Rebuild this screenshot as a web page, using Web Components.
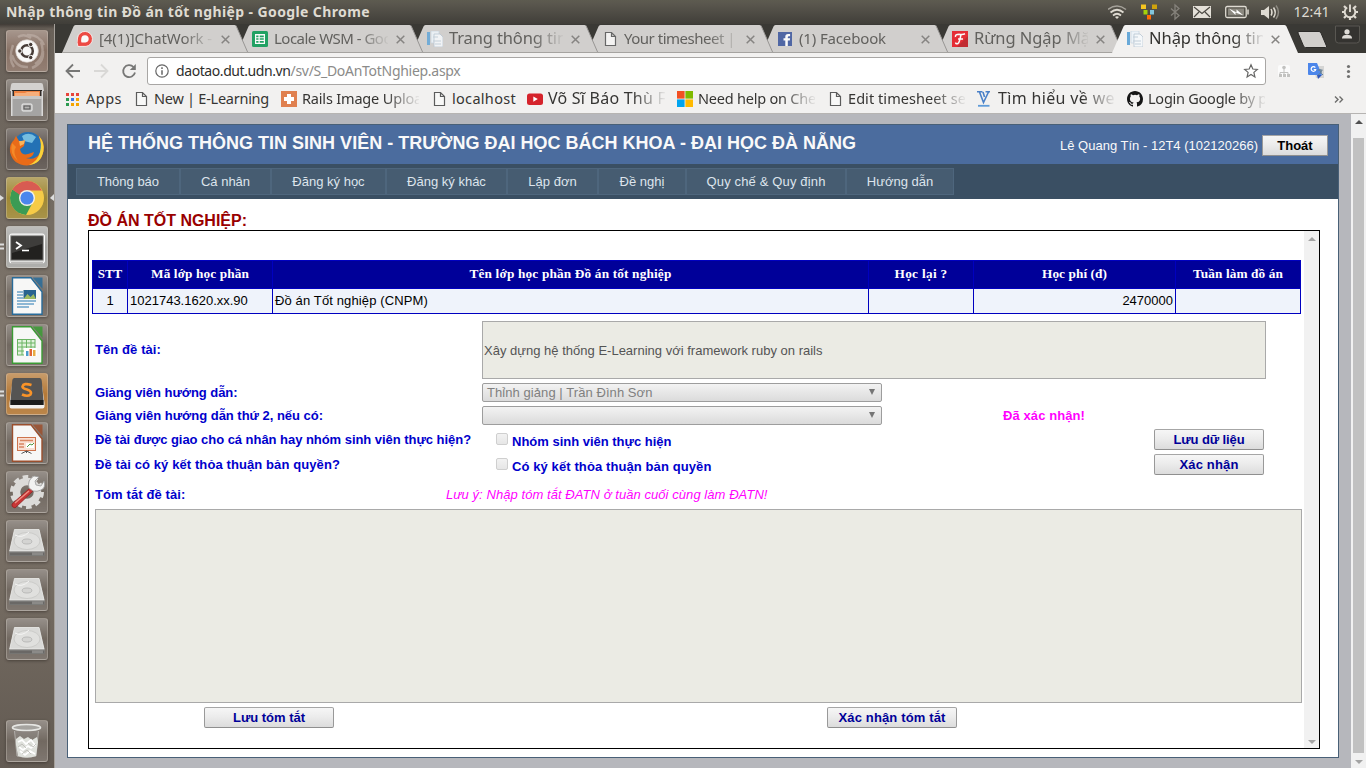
<!DOCTYPE html>
<html lang="vi">
<head>
<meta charset="utf-8">
<title>Nhập thông tin Đồ án tốt nghiệp</title>
<style>
html,body{margin:0;height:100%;overflow:hidden}
body{font-family:"Liberation Sans",Arial,sans-serif;font-size:13px}
</style>
</head>
<body>
<desktop-screen></desktop-screen>
<script>
const define = (name, html, setup) => {
  const tpl = document.createElement('template');
  tpl.innerHTML = html;
  customElements.define(name, class extends HTMLElement {
    constructor(){ super(); this.attachShadow({mode:'open'}); }
    connectedCallback(){
      if (this.shadowRoot.childNodes.length) return;
      if (setup) setup(this, tpl); else this.shadowRoot.append(tpl.content.cloneNode(true));
    }
  });
};

/* One line of text whose tracking is adjusted to a given width */
customElements.define('fit-text', class extends HTMLElement {
  constructor(){ super(); this.attachShadow({mode:'open'}).innerHTML =
    '<style>:host{display:inline-block;white-space:pre}span{display:inline-block}</style><span><slot></slot></span>'; }
  connectedCallback(){
    requestAnimationFrame(()=>this.fit());
    this.fit();
  }
  fit(){
    const w = +this.getAttribute('w'), s = this.shadowRoot.querySelector('span');
    s.style.letterSpacing = '0';
    const n = s.getBoundingClientRect().width, c = this.textContent.length;
    if (!w || !n) return;
    this.style.width = w + 'px';
    s.style.letterSpacing = ((w - n) / c).toFixed(3) + 'px';
  }
});

const FILE = '<svg width="16" height="16" viewBox="0 0 16 16"><path d="M3.5 1.5h6l4 4v9h-10zM9.5 1.5v4h4" fill="#f8f8f7" stroke="#5c5c5c" stroke-width="1.2"/></svg>';
const PAGES = '<svg width="16" height="16" viewBox="0 0 16 16"><path d="M0 1h3v13H0z" fill="#69a9d8"/><path d="M4 0h8v12H4z" fill="#edf3f8" stroke="#c5d3df" stroke-width=".7"/><path d="M7 3h6l3 3v10H7z" fill="#f5f8fa" stroke="#b7c5d2" stroke-width=".8"/><path d="M6 6h5M6 10h8M8 13h6" stroke="#c1ced9"/></svg>';
const ICONS = {
  file: FILE, pages: PAGES,
  chatwork:'<svg width="16" height="16" viewBox="0 0 16 16"><path d="M1 15.5Q-.5 12 .5 7A7.5 7.5 0 1 1 9 15.4Q5 15.3 1 15.5Z" fill="#f03c36" stroke="#fff" stroke-width=".8"/><path d="M4.5 11.5Q3.800 10 4.300 7.500A3.700 3.700 0 1 1 8.500 11.500Z" fill="#fff"/></svg>',
  sheets:'<svg width="16" height="16" viewBox="0 0 16 16"><rect width="16" height="16" rx="1.500" fill="#0f9d58"/><path d="M3 3h10v10H3z" fill="#fff"/><path d="M4.200 4.500h2.300v1.700H4.200zM7.700 4.500h4.100v1.700H7.700zM4.200 7.300h2.300v1.500H4.200zM7.700 7.300h4.100v1.500H7.700zM4.200 10h2.300v1.700H4.200zM7.700 10h4.100v1.700H7.700z" fill="#0f9d58"/></svg>',
  fb:'<svg width="16" height="16" viewBox="0 0 16 16"><rect x="1" y="1" width="14" height="14" fill="#435ca0"/><path d="M8.300 15V9.600H6.500V7.300h1.800V5.800q0-2.800 2.800-2.800h2v2.300h-1.300q-1 0-1 1v1h2.300l-.3 2.300h-2V15z" fill="#fff"/></svg>',
  red:'<svg width="16" height="16" viewBox="0 0 16 16"><rect width="16" height="16" fill="#e81c25"/><path d="M16 5v11H5z" fill="#c01b22"/><path d="M3.500 6Q3 3.200 7 3.200q4 .5 6-.4M9 3.500q-1.500 8-3 9Q4 13.500 3.500 11.500M6 8h5" fill="none" stroke="#fff" stroke-width="1.500"/></svg>',
  apps:'<svg width="16" height="16" viewBox="0 0 16 16"><path d="M1 2h3v3H1z M6 2h3v3H6z M11 2h3v3h-3z" fill="#e8453c"/><path d="M1 7h3v3H1z" fill="#2d9a50"/><path d="M6 7h3v3H6z" fill="#3c78e7"/><path d="M11 7h3v3h-3z" fill="#f5a400"/><path d="M1 12h3v3H1z" fill="#2d9a50"/><path d="M6 12h3v3H6zM11 12h3v3h-3z" fill="#f5a400"/></svg>',
  plus:'<svg width="16" height="16" viewBox="0 0 16 16"><rect width="16" height="16" fill="#e0804f"/><path d="M6 3h4v3h3v4h-3v3H6v-3H3V6h3z" fill="#fff"/></svg>',
  yt:'<svg width="16" height="16" viewBox="0 0 16 16"><rect y="2.500" width="16" height="11.500" rx="2.500" fill="#d5232b"/><path d="M6.300 5.500v5.200l4.500-2.600z" fill="#fff"/></svg>',
  ms:'<svg width="16" height="16" viewBox="0 0 16 16"><path d="M0 0h7.600v7.600H0z" fill="#f25022"/><path d="M8.400 0H16v7.600H8.400z" fill="#7fba00"/><path d="M0 8.400h7.600V16H0z" fill="#00a4ef"/><path d="M8.400 8.400H16V16H8.400z" fill="#ffb900"/></svg>',
  v:'<svg width="16" height="16" viewBox="0 0 16 16"><path d="M0 .8h5.500M8.500.8h4.500M2.500 1l4 10.500L11.500 1M6 1l1.500 5" fill="none" stroke="#4a80c8" stroke-width="1.600"/><path d="M1 14.800h11.500" stroke="#5f9bd8" stroke-width="1.800"/></svg>',
  gh:'<svg width="16" height="16" viewBox="0 0 16 16"><path fill="#161616" d="M8 0C3.580 0 0 3.580 0 8c0 3.540 2.290 6.530 5.470 7.590.4.070.55-.17.55-.38 0-.19-.01-.82-.01-1.490-2.010.37-2.530-.49-2.690-.94-.09-.23-.48-.94-.82-1.130-.28-.15-.68-.52-.01-.53.63-.01 1.080.58 1.230.82.720 1.210 1.870.87 2.330.66.070-.52.28-.87.510-1.070-1.780-.2-3.640-.89-3.640-3.950 0-.87.310-1.590.82-2.150-.08-.2-.36-1.020.08-2.120 0 0 .67-.21 2.200.82a7.600 7.600 0 0 1 4 0c1.530-1.040 2.200-.82 2.200-.82.440 1.100.16 1.920.08 2.120.51.56.82 1.270.82 2.150 0 3.070-1.870 3.750-3.650 3.950.29.25.54.73.54 1.480 0 1.070-.01 1.930-.01 2.200 0 .21.15.46.55.38A8 8 0 0 0 16 8c0-4.420-3.580-8-8-8z"/></svg>'
};

/* Top desktop panel */
define('desktop-panel', `<style>
:host{display:flex;align-items:center;height:24px;background:linear-gradient(#5d5b50,#5a574e 15%,#403e39);color:#dfdbd2;font-family:"Noto Sans","Open Sans",sans-serif;box-sizing:border-box;padding-left:6px}
b{font-size:14px;line-height:24px;flex:1}
svg{display:block;flex:none}
</style>
<b><fit-text w="364">Nhập thông tin Đồ án tốt nghiệp - Google Chrome</fit-text></b>
<svg width="258" height="24" viewBox="0 0 258 24">
 <g transform="translate(-1108 0)" fill="none" stroke="#dfdbd2">
  <path d="M1108 9.500q9-7 18 0" stroke="#a5a29a" stroke-width="1.500"/><path d="M1110.500 12.500q6.500-5.500 13 0M1113 15.500q4-3.500 8 0" stroke-width="1.700"/><path d="M1115 17l2 2 2-2q-2-1.500-4 0z" fill="#dfdbd2" stroke="none"/>
  <path d="M1141 4.500h5v4.500h-5z" fill="#f5c520" stroke="none"/><path d="M1152 4.500h5v4.500h-5z" fill="#cfa30c" stroke="none"/><path d="M1143.500 10h4v4.500h-4z" fill="#a5d20a" stroke="none"/><path d="M1150 10h4v4.500h-4z" fill="#83c5dc" stroke="none"/><path d="M1147 15h4v4.500h-4z" fill="#ff6a05" stroke="none"/>
  <path d="M1171 8.500l8 7-4 3.500V5l4 3.500-8 7" stroke="#85827b" stroke-width="1.300"/>
  <rect x="1193" y="6" width="18" height="12" fill="#e4e0d8" stroke="none"/><path d="M1194 7l8 6.500 8-6.500M1194 17l5-5M1210 17l-5-5" stroke="#4b4842" stroke-width="1.200"/>
  <rect x="1225.700" y="6.500" width="20.500" height="11" rx="1.500" stroke-width="1.300"/><rect x="1228" y="8.500" width="16" height="7" fill="#8b887f" stroke="none"/><path d="M1248 9.500v5" stroke-width="1.500"/><path d="M1229 8.500l7.500 4v-3l7 6-8-3v2.500z" fill="#fff" stroke="none"/>
  <path d="M1261 10h3l5-4v13l-5-4h-3z" fill="#dfdbd2" stroke="none"/><path d="M1271 9q2 3.500 0 6.500M1273.500 7.500q3.500 5 0 10" stroke-width="1.500"/><path d="M1276 5.500q5 6.500 0 13.500" stroke="#8e8b83" stroke-width="1.400"/>
 </g>
 <text x="185.500" y="17.300" textLength="36" lengthAdjust="spacingAndGlyphs" font-size="14" fill="#dfdbd2">12:41</text>
 <g transform="translate(242 12)" stroke="#dfdbd2" fill="none"><path d="M-2.800-4.500A5.300 5.300 0 1 0 2.800-4.500" stroke-width="1.900"/><path d="M0-7.500V0" stroke-width="1.900"/><path d="M4-4 6-6M-4-4-6-6M5.500 0H8M-5.500 0H-8M4 4 6 6M-4 4-6 6M0 5.500V8" stroke-width="2.200"/></g>
</svg>`);

/* Launcher tile */
define('launcher-tile','', (el)=>{
  el.shadowRoot.innerHTML = `<style>
:host{display:block;position:relative;width:42px;height:42px;flex:none}
.t{width:42px;height:42px;box-sizing:border-box;border-radius:3px;border:1px solid rgba(225,218,210,.3);background:linear-gradient(rgba(255,255,255,.28),rgba(255,255,255,.03) 50%,rgba(255,255,255,.12)),${el.getAttribute('tint')||'#6d645c'};box-shadow:0 1px 3px rgba(30,25,20,.45)}
svg{display:block;margin:-1px}
.m{position:absolute;margin:0;top:17px;left:-6px}
.n{left:43px}
</style><div class="t"><svg width="42" height="42" viewBox="0 0 42 42">${TILES[el.getAttribute('kind')]}</svg></div>`
  + (el.getAttribute('marks')==='arrows' ? '<svg class="m" width="5" height="8"><path d="M0 1l4 3-4 3z" fill="#ddd"/></svg><svg class="m n" width="5" height="8"><path d="M5 0v7L1 4z" fill="#ddd"/></svg>' : '')
  + (el.getAttribute('marks')==='bars' ? '<svg class="m" width="5" height="8"><path d="M0 1.500h4M0 5.500h4" stroke="#ddd" stroke-width="2"/></svg>' : '');
});
const doc = (c,b)=>`<path d="M6.500 2.800h18.500l11 14v22.400H6.500z" fill="#f7f7f6" stroke="${c}" stroke-width="1.400"/><path d="M26.500 2.500H36.500V14z" fill="${c}" fill-opacity=".85"/>${b}`;
const DISK = '<path d="M8.500 9.500h25l5 22v3.500q0 1-1 1H4.500q-1 0-1-1v-3.500z" fill="#9b9b99"/><path d="M8.500 9.500h24.500l5 21.500H3.700z" fill="#d9d9d7" stroke="#ececea" stroke-width=".8"/><path d="M3.500 31.500h35v4.300h-35z" fill="#6a6866"/><path d="M3.500 31.300h35v1h-35z" fill="#a9a8a6"/><path d="M26 32.300h11v3H26z" fill="#8b8a88"/><ellipse cx="21" cy="21" rx="13" ry="8.500" fill="#e0e0de" stroke="#c6c6c4" stroke-width=".8"/><ellipse cx="21" cy="21.500" rx="4.800" ry="2.500" fill="#d4d4d2" stroke="#b0b0ae" stroke-width=".8"/><path d="M9 15q7 4 14-3" fill="none" stroke="#f4f4f3" stroke-width="1"/>';
const TILES = {
 ubuntu:'<path d="M21 5Q33 4 38 15M37 21Q38 33 26 38M8 37Q2 29 7 15M12 7Q18 3 25 8M35 12Q40 27 29 34M22 37Q10 38 6 25" fill="none" stroke="#c9bcb3" stroke-opacity=".5" stroke-width="2.500"/><circle cx="21" cy="21" r="11.300" fill="#f9f8f7" stroke="#d6ccc5" stroke-width=".7"/><circle cx="21" cy="21" r="5.800" fill="none" stroke="#463b36" stroke-width="2.500"/><g fill="#463b36" stroke="#f9f8f7" stroke-width="1"><circle cx="13.800" cy="21" r="2.200"/><circle cx="24.700" cy="14.500" r="2.200"/><circle cx="24.700" cy="27.500" r="2.200"/></g>',
 files:'<path d="M5 6q0-2 2-2h28q2 0 2 2l1 6H4z" fill="#d3d1cf"/><path d="M6 11h30v7H6z" fill="#302a26"/><path d="M8 12h26v5H8z" fill="#ee8241"/><path d="M9 14h10l2-1h12v5H9z" fill="#f6ae7b"/><path d="M6 17h30v20H6z" fill="#a5a4a3"/><path d="M5 12h1.500v25H5zM35.500 12H37v25h-1.500z" fill="#dbdad9"/><path d="M6 17h30v3H6z" fill="#c7c6c5"/><rect x="16" y="25" width="10" height="7" rx="1" fill="#b4b3b2" stroke="#eee"/><rect x="18" y="27" width="6" height="3" fill="none" stroke="#555"/>',
 firefox:'<circle cx="22" cy="19" r="15" fill="#2371b5"/><path d="M16 8q7-5 14 1l-4 6-8-2z" fill="#75bde0"/><path d="M33 8q6 7 4.500 15Q35 36 21 37.500 7 37 4 24q-1-8 4-12l2-4 3 5q5 0 6-1l-1 6-4 3q1 7 8 5l6-2q-1 6-8 6 9 3 14-5 3-6-1-16z" fill="#e96b18"/><path d="M33 8q6 7 4.500 15Q35 36 23 37q9-4 11-13 2-9-1-16z" fill="#f9d23a"/><path d="M13 13q5 0 6-1l-1 4-4 2z" fill="#fab45b"/><path d="M6 15q-3 11 6 18-6-9-2-14z" fill="#f58a28"/>',
 chrome:'<circle cx="21" cy="21" r="17" fill="#f6cb47"/><path d="M21 21L6.300 12.500A17 17 0 0 0 20 38l7-13z" fill="#3b9b54"/><path d="M6.300 12.500Q12 4 21 4q10 0 15 9.500H21L14 18z" fill="#d85b52"/><circle cx="21" cy="21" r="8" fill="#f5f1ea"/><circle cx="21" cy="21" r="6.600" fill="#4b86ee"/>',
 terminal:'<rect x="3.500" y="8" width="35" height="29" rx="2" fill="#dededc" stroke="#fafafa"/><rect x="5" y="10" width="32" height="24" fill="#22211f" stroke="#6f6f6c"/><path d="M6 11h30v7L6 27z" fill="#3e3d3b"/><path d="M10 16l5 3.500-5 3.500" fill="none" stroke="#fff" stroke-width="1.800"/><path d="M16 24.500h7" stroke="#fff" stroke-width="1.600"/><path d="M5 36h32v2H5z" fill="#bbbab8"/>',
 writer:doc('#286b99','<path d="M11 17h6M11 20h6M11 23h6M11 26h19M11 29h17M11 32h12" stroke="#6ba3c9" stroke-width="1.500"/><path d="M17.500 15h12.500v9H17.500z" fill="#286390"/><path d="M17.500 24l4-5 3 3 3-3 2.500 5z" fill="#9dba62"/>'),
 calc:doc('#3b9b34','<path d="M11 15h18v16H11z" fill="#e1f2dc"/><path d="M11 15.500h18M11 19h18M11 23h18M11 27h18M11 31h8M11.500 15v16M16 15v16M20.500 15v12M25 15v9M29 15v9" stroke="#6bb463"/><path d="M18 24h13v8H18z" fill="#fff"/><path d="M20 27h2.500v5h-2.500z" fill="#4b9bcc"/><path d="M23.500 25h2.500v7h-2.500z" fill="#df6534"/><path d="M27 26h2.500v6h-2.500z" fill="#e8ac43"/>'),
 sublime:'<path d="M6 12h30l2.500 18v3.500q0 2-2 2h-31q-2 0-2-2V30z" fill="#f2f0ed"/><path d="M8.500 5h25q2 0 2.300 3l1.700 19v5H4.500v-5l1.700-19q.3-3 2.300-3z" fill="#555453"/><path d="M4.500 27h33v5h-33z" fill="#1b1b1a"/><path d="M25.500 12q-8-2.500-9 1.500 0 2 4.500 3 5.500 2 3.500 5-3 2.500-8.500 0" fill="none" stroke="#f99328" stroke-width="2.700"/>',
 impress:doc('#9b4f2d','<rect x="11.500" y="15.500" width="18" height="13" fill="#f9dfd2" stroke="#cd734c"/><path d="M14 18.500h13M13 22h5M13 25h5" stroke="#d98763" stroke-width="1.500"/><path d="M20 21h8v5h-8z" fill="#fff"/><path d="M21 25l3-3 2 1 2-2" stroke="#4b9840" fill="none"/><path d="M15.500 31.500l5-2.500 5 2.500M20.500 29v2" fill="none" stroke="#555"/>'),
 settings:'<circle cx="21" cy="21" r="10.500" fill="none" stroke="#dcdbd9" stroke-width="7.500"/><circle cx="21" cy="21" r="15" fill="none" stroke="#dcdbd9" stroke-width="4" stroke-dasharray="5.500 3.925"/><path d="M24 17l-18 16q-1 3 3 4l18-17z" fill="#c83636" stroke="#8f2222" stroke-width=".8"/><path d="M9 32l14-12" stroke="#ee8f83" stroke-width="1.500"/><path d="M23 17q-2-8 5-12l5 1-4 4 1 4 5 1 3-5q2 7-3 9-4 2-8 1z" fill="#f2f2f1" stroke="#999" stroke-width=".8"/>',
 disk:DISK,
 trash:'<ellipse cx="20.500" cy="7.500" rx="14" ry="3" fill="#a5a39f" stroke="#e6e6e3" stroke-width="1.600"/><path d="M8.500 11l2.500 25q9.500 3 19 0l2.500-25" fill="#9a9894" fill-opacity=".35" stroke="#bcbab6" stroke-width=".8"/><path d="M10 19l4-3 4 3 4-2 4 3 5-3 1 5-1 7-1 7q-9 3-18 0l-2-11z" fill="#dfe1dc"/><path d="M12 22l4-2 4 4 5-4 4 5-4 3-3-2-5 4-4-3M14 31l5 4 5-4 5 3" fill="none" stroke="#fff" stroke-width="1.700"/><path d="M12 27l4-3 4 4M22 23l5 4 3-3M16 34l5-4 4 4" fill="none" stroke="#b9b8b3" stroke-width=".8"/>'
};
define('app-launcher', `<style>
:host{display:flex;flex-direction:column;gap:7px;width:55px;height:744px;box-sizing:border-box;padding:6px 0 0 6px;border-right:1px solid #a49f99;background:linear-gradient(#403b36,#696159 5px,#716960 20%,#81786e 45%,#756c62 75%,#625a52)}
.last{margin-top:53px}
</style>
<launcher-tile kind="ubuntu" tint="#846d60"></launcher-tile><launcher-tile kind="files"></launcher-tile><launcher-tile kind="firefox" tint="#584f49"></launcher-tile><launcher-tile kind="chrome" tint="#9c842f" marks="arrows"></launcher-tile><launcher-tile kind="terminal" tint="#a4a4a1" marks="bars"></launcher-tile><launcher-tile kind="writer"></launcher-tile><launcher-tile kind="calc"></launcher-tile><launcher-tile kind="sublime" tint="#b27531" marks="bars"></launcher-tile><launcher-tile kind="impress"></launcher-tile><launcher-tile kind="settings"></launcher-tile><launcher-tile kind="disk"></launcher-tile><launcher-tile kind="disk"></launcher-tile><launcher-tile kind="disk"></launcher-tile><launcher-tile kind="trash" class="last"></launcher-tile>`);

/* Browser tab */
define('browser-tab','', el=>{
  const on = el.hasAttribute('active');
  el.shadowRoot.innerHTML = `<style>
:host{display:flex;position:relative;align-items:center;width:175px;height:28px;box-sizing:border-box;padding-left:15px;flex:none;color:${on?'#33322f':'#62615e'}}
.bg{position:absolute;left:0;top:0;overflow:visible}
.i{position:relative;width:16px;height:16px;${on?'':'opacity:.9'}}.i svg{display:block}
.l{position:relative;width:114px;margin-left:6px;overflow:hidden;font-size:${el.hasAttribute('big')?'16.500px':'15px'};line-height:26px;height:28px;-webkit-mask-image:linear-gradient(90deg,#000 84px,transparent 116px)}
.x{position:relative;margin-left:8px}
</style><svg class="bg" width="187" height="28"><path d="M0 28L11.500 1.500Q12 0 13.500 0H172.500Q174 0 174.500 1.500L186 28Z" fill="${on?'#f2f1f0':'#d1cfcd'}"/>${on?'':'<path d="M174 .5L186 28" fill="none" stroke="#989694"/><path d="M0 27.500H186" stroke="#a5a3a0"/>'}</svg>
<div class="i">${ICONS[el.getAttribute('icon')]}</div><div class="l"><slot></slot></div>
<svg class="x" width="9" height="9"><path d="M.7.700l7.600 7.600M8.300.7L.7 8.300" stroke="#868482" stroke-width="1.500"/></svg>`;
});
define('tab-strip', `<style>
:host{display:flex;height:29px;padding:1px 0 0 7px;box-sizing:border-box;background:#3a3935;font-family:"Noto Sans",sans-serif}
browser-tab:nth-of-type(1){z-index:7}browser-tab:nth-of-type(2){z-index:6}browser-tab:nth-of-type(3){z-index:5}browser-tab:nth-of-type(4){z-index:4}browser-tab:nth-of-type(5){z-index:3}browser-tab:nth-of-type(6){z-index:2}browser-tab:nth-of-type(7){z-index:8}
svg.r{margin-left:7px}
</style>
<browser-tab icon="chatwork"><fit-text w="113">[4(1)]ChatWork -</fit-text></browser-tab>
<browser-tab icon="sheets"><fit-text w="118">Locale WSM - Goo</fit-text></browser-tab>
<browser-tab icon="pages" big><fit-text w="118">Trang thông tin</fit-text></browser-tab>
<browser-tab icon="file"><fit-text w="111">Your timesheet |</fit-text></browser-tab>
<browser-tab icon="fb"><fit-text w="87">(1) Facebook</fit-text></browser-tab>
<browser-tab icon="red" big><fit-text w="116">Rừng Ngập Mặ</fit-text></browser-tab>
<browser-tab icon="pages" active big><fit-text w="117">Nhập thông tin</fit-text></browser-tab>
<svg class="r" width="72" height="28"><path d="M5 6.500h20q1.500 0 2 1.500l5.500 13q.5 1.500-1 1.500h-20q-1.500 0-2-1.500L4 8q-.5-1.500 1-1.500z" fill="#d1cfcc" stroke="#2b2a28" stroke-width="1"/><path d="M41.500 1v14q0 3 3 3h18q3 0 3-3V1z" fill="#343330" stroke="#595752"/><circle cx="53" cy="6.800" r="2.600" fill="#dedbd6"/><path d="M48 13.500q0-3.500 3.500-3.500h3q3.500 0 3.500 3.500z" fill="#dedbd6"/></svg>`);

define('address-row', `<style>
:host{display:flex;align-items:center;height:36px;padding-left:10px;box-sizing:border-box;background:#f2f1f0;font-family:"Noto Sans",sans-serif}
svg{display:block;flex:none}
.bar{display:flex;align-items:center;width:1119px;height:28px;box-sizing:border-box;border:1px solid #a8a6a4;border-radius:3px;background:#fff;margin-left:8px;padding-left:7px;font-size:14px;line-height:26px;color:#2e2e2c}
.bar i{font-style:normal;color:#8b8b89;flex:1}
fit-text{vertical-align:top}
</style>
<svg width="74" height="20" viewBox="65 61 74 20" fill="none" stroke-width="1.800"><path d="M80 71H67M73 64.500L66.500 71 73 77.500" stroke="#777776"/><path d="M94 71h13M101 64.500l6.500 6.500-6.500 6.500" stroke="#d9d8d6"/><path d="M133.500 67A6 6 0 1 0 135 72.500" stroke="#777776"/><path d="M135.800 64v6h-6z" fill="#777776"/></svg>
<div class="bar"><svg width="14" height="14"><circle cx="7" cy="7" r="6.200" fill="none" stroke="#666" stroke-width="1.200"/><path d="M7 3.300v1.700M7 6.200v4.500" stroke="#666" stroke-width="1.500"/></svg>
<span style="margin-left:7px"><fit-text w="114.5">daotao.dut.udn.vn</fit-text></span><i><fit-text w="170">/sv/S_DoAnTotNghiep.aspx</fit-text></i>
<svg width="16" height="16" style="margin-right:6px"><path d="M8 1.800l1.800 4.200 4.500.4-3.400 3 1 4.500L8 11.500l-3.900 2.400 1-4.500-3.400-3 4.500-.4z" fill="none" stroke="#666665" stroke-width="1.200"/></svg></div>
<svg width="84" height="20" viewBox="1274 61 84 20" style="margin-left:8px"><rect x="1278" y="65" width="12" height="12" rx="2" fill="#fbfbfb"/><path d="M1284 68v8M1280 75v-2.500h8V75" stroke="#c2c2c0" fill="none"/><circle cx="1284" cy="67.500" r="1.800" fill="#c2c2c0"/><path d="M1279 74h3v3h-3zM1283 74h3v3h-3zM1287 74h3v3h-3z" fill="#c2c2c0"/><path d="M1313 66h11v12h-8z" fill="#d5d5d4"/><path d="M1308 63h9l5 12h-13q-1 0-1-1z" fill="#4c86ea"/><path d="M1317 75h5l-4 4z" fill="#2e58bf"/><path d="M1315.300 67.600a2.300 2.300 0 1 0 .4 1.900h-2" fill="none" stroke="#fff" stroke-width="1.200"/><path d="M1317.500 70h5M1320 69v1q1 4 3 5M1322 70q-1 4-4 5" stroke="#647f95" fill="none"/><g fill="#70706f"><circle cx="1348.500" cy="66.500" r="1.600"/><circle cx="1348.500" cy="71.500" r="1.600"/><circle cx="1348.500" cy="76.500" r="1.600"/></g></svg>`);

define('bookmark-item','', el=>{
  el.shadowRoot.innerHTML = `<style>:host{display:flex;align-items:center;flex:none;box-sizing:border-box;width:${el.getAttribute('span')}px}svg{display:block;flex:none}
.l{margin:-3px 0 0 5px;font-size:${el.hasAttribute('big')?'16px':'14.500px'};line-height:22px;height:22px;overflow:hidden;max-width:117px;${el.hasAttribute('fade')?'-webkit-mask-image:linear-gradient(90deg,#000 84px,transparent 119px)':''}}</style>${ICONS[el.getAttribute('icon')]}<div class="l"><slot></slot></div>`;
});
define('bookmark-bar', `<style>
:host{display:flex;height:25px;padding:0 0 4px 10px;box-sizing:border-box;align-items:center;background:#f2f1f0;border-bottom:1px solid #b6b4b2;color:#363533;font-family:"Noto Sans",sans-serif}
</style>
<bookmark-item icon="apps" span="68"><fit-text w="36">Apps</fit-text></bookmark-item>
<bookmark-item icon="file" span="148"><fit-text w="115">New | E-Learning</fit-text></bookmark-item>
<bookmark-item icon="plus" span="150" fade><fit-text w="120">Rails Image Uploa</fit-text></bookmark-item>
<bookmark-item icon="file" span="96"><fit-text w="64">localhost</fit-text></bookmark-item>
<bookmark-item icon="yt" span="150" fade big><fit-text w="118">Võ Sĩ Báo Thù F</fit-text></bookmark-item>
<bookmark-item icon="ms" span="150" fade><fit-text w="118">Need help on Che</fit-text></bookmark-item>
<bookmark-item icon="file" span="150" fade><fit-text w="118">Edit timesheet se</fit-text></bookmark-item>
<bookmark-item icon="v" span="150" fade big><fit-text w="117">Tìm hiểu về we</fit-text></bookmark-item>
<bookmark-item icon="gh" span="207" fade><fit-text w="119">Login Google by p</fit-text></bookmark-item>
<svg width="10" height="7"><path d="M1 .5L4 3.500 1 6.500M5.500.5l3 3-3 3" fill="none" stroke="#6d6d6b" stroke-width="1.400"/></svg>`);

/* Push button, read-only select, check box */
define('push-button', `<style>
:host{display:flex;align-items:center;justify-content:center;box-sizing:border-box;height:21px;border:1px solid #999;border-color:#a6a6a6 #999 #8f8f8f;border-radius:2px;background:linear-gradient(#f6f6f6,#ececec 45%,#dcdcdc);color:#000099;font:bold 13px "Liberation Sans",Arial,sans-serif;line-height:19px;flex:none}
</style><slot></slot>`);
define('drop-list', `<style>
:host{display:flex;align-items:center;justify-content:space-between;box-sizing:border-box;width:400px;height:19px;border:1px solid #9d9d9d;border-radius:2px;background:linear-gradient(#f3f3f3,#e8e8e8 45%,#dbdbdb);color:#808080;font-size:13px;line-height:17px;padding:0 6px 0 4px;flex:none}
svg{display:block;margin-top:-2px}
</style><span><slot></slot></span><svg width="6" height="6"><path d="M0 0h6L3 6z" fill="#757575"/></svg>`);
define('check-option', `<style>
:host{display:flex;flex:none;align-items:flex-start;gap:4px;font-weight:bold}
i{width:12px;height:12px;box-sizing:border-box;border:1px solid #cfcfcf;border-radius:2px;background:linear-gradient(#f2f2f2,#e6e6e6)}
span{line-height:15px;margin-top:1px}
</style><i></i><span><slot></slot></span>`);
define('scroll-track', `<style>
:host{display:flex;flex-direction:column;align-items:center;width:15px;background:#f1f1f1;box-sizing:border-box;flex:none}
.t{flex:1;width:11px}
:host([thumb]) .t{background:#c1c1c1}
.u{margin:6px 0 12px}.d{margin:7px 0 4px}
:host([thumb]) .u path{fill:#505050}:host([thumb]) .u{margin:6px 0 14px}
svg{display:block}
</style><svg class="u" width="8" height="4"><path d="M4 0l4 4H0z" fill="#a3a3a3"/></svg><div class="t"></div><svg class="d" width="8" height="4"><path d="M0 0h8L4 4z" fill="#a3a3a3"/></svg>`);

define('site-header', `<style>
:host{display:block}
.h{display:flex;justify-content:space-between;height:39px;box-sizing:border-box;background:#4b6c9e;color:#f9f9f9;padding:0 10px 0 20px}
h1{margin:7px 0 0;font-size:18px;line-height:22px}
.u{display:flex;align-items:center;gap:4px;height:21px;margin-top:10px}
push-button{color:#000;width:66px;border-radius:0}
</style><div class="h"><h1><fit-text w="768">HỆ THỐNG THÔNG TIN SINH VIÊN - TRƯỜNG ĐẠI HỌC BÁCH KHOA - ĐẠI HỌC ĐÀ NẴNG</fit-text></h1><div class="u"><fit-text w="198">Lê Quang Tín - 12T4 (102120266)</fit-text><push-button>Thoát</push-button></div></div>`);
define('site-menu', `<style>
:host{display:flex;height:35px;box-sizing:border-box;background:#3a4f63;padding:4px 8px}
a{box-sizing:border-box;height:27px;border:1px solid #4e667d;background:#465c71;color:#dde4ec;text-align:center;line-height:26px}
</style><a style="width:104px">Thông báo</a><a style="width:91px">Cá nhân</a><a style="width:115px">Đăng ký học</a><a style="width:121px">Đăng ký khác</a><a style="width:91px">Lập đơn</a><a style="width:88px">Đề nghị</a><a style="width:160px"><fit-text w="119">Quy chế &amp; Quy định</fit-text></a><a style="width:108px">Hướng dẫn</a>`);
define('course-table', `<style>
:host{display:block;width:1209px;height:54px}
table{border-collapse:collapse;table-layout:fixed;width:1209px;height:54px}
th,td{border:1px solid #0000c0;padding:0 2px;font-size:13px;overflow:hidden;white-space:nowrap;box-sizing:border-box}
th{background:#000099;color:#fff;font-family:"Liberation Serif","Times New Roman",serif;height:28px;padding-bottom:2px}
th fit-text{font-size:13.3px}
td{background:#eff3fb;color:#000;height:25px;line-height:16px;padding-bottom:1px}
</style><table><colgroup><col style="width:35px"><col style="width:145px"><col style="width:596px"><col style="width:105px"><col style="width:202px"><col style="width:125px"></colgroup>
<tr><th>STT</th><th><fit-text w="98">Mã lớp học phần</fit-text></th><th><fit-text w="202">Tên lớp học phần Đồ án tốt nghiệp</fit-text></th><th><fit-text w="53">Học lại ?</fit-text></th><th><fit-text w="65">Học phí (đ)</fit-text></th><th><fit-text w="90">Tuần làm đồ án</fit-text></th></tr>
<tr><td style="text-align:center">1</td><td>1021743.1620.xx.90</td><td><fit-text w="153">Đồ án Tốt nghiệp (CNPM)</fit-text></td><td></td><td style="text-align:right">2470000</td><td></td></tr></table>`);
define('thesis-form', `<style>
:host{display:block;padding:5px 0 0 3px;color:#0000cc}
.r{display:flex;align-items:center;height:23px}
.k{width:387px;font-weight:bold;flex:none;line-height:16px}
.in{width:784px;height:58px;box-sizing:border-box;border:1px solid #a9a9a9;background:#ebebe4;color:#545454;display:flex;align-items:center;padding:1px 1px 0}
.pink{color:#ff00ff}
check-option{margin:2px 0 0 14px;width:644px}
.ta{width:1207px;height:194px;box-sizing:border-box;border:1px solid #a9a9a9;background:#ebebe4}
.b{display:flex;padding:4px 0 0 109px}
</style>
<div class="r" style="height:62px"><div class="k"><fit-text w="66">Tên đề tài:</fit-text></div><div class="in"><fit-text w="338.5">Xây dựng hệ thống E-Learning với framework ruby on rails</fit-text></div></div>
<div class="r"><div class="k"><fit-text w="142.5">Giảng viên hướng dẫn:</fit-text></div><drop-list><fit-text w="165.5">Thỉnh giảng | Trần Đình Sơn</fit-text></drop-list></div>
<div class="r"><div class="k"><fit-text w="228">Giảng viên hướng dẫn thứ 2, nếu có:</fit-text></div><drop-list></drop-list><b class="pink" style="margin-left:121px"><fit-text w="82">Đã xác nhận!</fit-text></b></div>
<div class="r" style="height:25px"><div class="k"><fit-text w="376">Đề tài được giao cho cá nhân hay nhóm sinh viên thực hiện?</fit-text></div><check-option><fit-text w="159.5">Nhóm sinh viên thực hiện</fit-text></check-option><push-button style="width:110px;margin-left:14px"><fit-text w="71">Lưu dữ liệu</fit-text></push-button></div>
<div class="r" style="height:25px"><div class="k"><fit-text w="245">Đề tài có ký kết thỏa thuận bản quyền?</fit-text></div><check-option><fit-text w="199.5">Có ký kết thỏa thuận bản quyền</fit-text></check-option><push-button style="width:110px;margin-left:14px"><fit-text w="59">Xác nhận</fit-text></push-button></div>
<div class="r" style="height:32px"><div class="k" style="width:351px;padding-top:3px"><fit-text w="90.5">Tóm tắt đề tài:</fit-text></div><i class="pink" style="padding-top:3px"><fit-text w="321.5">Lưu ý: Nhập tóm tắt ĐATN ở tuần cuối cùng làm ĐATN!</fit-text></i></div>
<div class="ta"></div>
<div class="b"><push-button style="width:130px"><fit-text w="72">Lưu tóm tắt</fit-text></push-button><push-button style="width:130px;margin-left:493px"><fit-text w="107">Xác nhận tóm tắt</fit-text></push-button></div>`);
define('web-page', `<style>
:host{display:flex;height:654px;background:#b6b7bc;font-family:"Liberation Sans",Arial,sans-serif;font-size:13px}
.body{flex:1;padding:10px 12px}
.page{height:634px;width:1272px;box-sizing:border-box;border:1px solid #496077;background:#fff}
h2{margin:0;color:#990000;font-size:16px;line-height:20px;padding:12px 0 0 20px;height:19px}
.box{display:flex;width:1232px;height:519px;box-sizing:border-box;border:1px solid #000;margin-left:20px}
.c{flex:1;padding:29px 0 0 3px;min-width:0}
</style><div class="body"><div class="page"><site-header></site-header><site-menu></site-menu><h2><fit-text w="159">ĐỒ ÁN TỐT NGHIỆP:</fit-text></h2><div class="box"><div class="c"><course-table></course-table><thesis-form></thesis-form></div><scroll-track></scroll-track></div></div></div><scroll-track thumb></scroll-track>`);
define('browser-window', `<style>:host{display:block;flex:1;min-width:0}</style><tab-strip></tab-strip><address-row></address-row><bookmark-bar></bookmark-bar><web-page></web-page>`);
define('desktop-screen', `<style>:host{display:block;width:1366px;height:768px;overflow:hidden}main{display:flex}</style><desktop-panel></desktop-panel><main><app-launcher></app-launcher><browser-window></browser-window></main>`);
</script>
</body>
</html>
